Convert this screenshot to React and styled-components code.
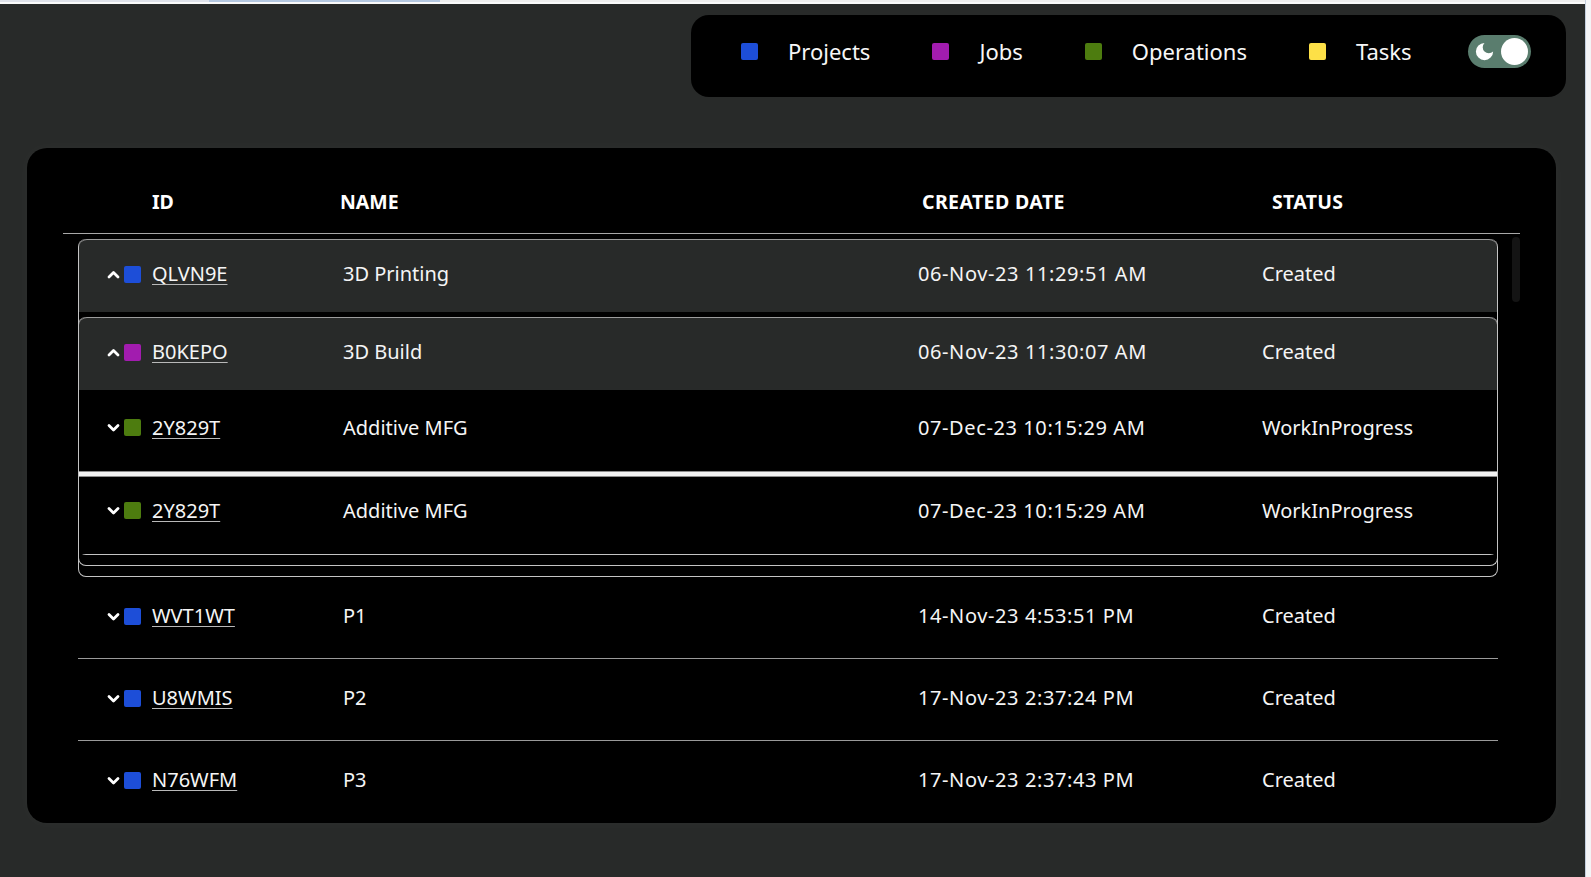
import React from 'react';
import styled, { createGlobalStyle } from 'styled-components';

const GlobalStyle = createGlobalStyle`
  html, body { margin: 0; padding: 0; background: #282a29; }
  body { font-family: "Noto Sans", "DejaVu Sans", sans-serif; color: #f5f5f5; }
  * { box-sizing: border-box; }
`;

const COLORS = {
  project: '#1d4ed8',
  job: '#a21caf',
  operation: '#4d7c0f',
  task: '#fde047',
};

const Window = styled.div`
  display: flex;
  width: 1591px;
  height: 877px;
  overflow: hidden;
  background: #282a29;
`;

const Main = styled.div`
  flex: 1;
  min-width: 0;
  display: flex;
  flex-direction: column;
`;

const BrowserEdge = styled.div`
  width: 6px;
  flex-shrink: 0;
  background: #f3f4f6;
  border-left: 1px solid #c3cedd;
`;

const TopStrip = styled.div`
  height: 4px;
  display: flex;
  align-items: flex-start;
  background: #fafafa;
  flex-shrink: 0;
`;

const TabSeg = styled.div`
  height: 2px;
  width: ${p => p.$w};
  flex: ${p => (p.$grow ? 1 : 'none')};
  background: ${p => p.$c};
`;

const Content = styled.div`
  display: flex;
  flex-direction: column;
  padding: 11px 19px 0 27px;
`;

const Legend = styled.div`
  align-self: flex-end;
  width: 875px;
  height: 82px;
  background: #000;
  border-radius: 18px;
  display: flex;
  align-items: center;
  padding: 0 0 10px 50px;
`;

const LegendItems = styled.div`
  display: flex;
  align-items: center;
  gap: 62px;
`;

const LegendItem = styled.div`
  display: flex;
  align-items: center;
  gap: 30px;
  font-size: 22px;
  line-height: 1;
  color: #f7f7f7;
`;

const Swatch = styled.span`
  display: inline-block;
  width: 17px;
  height: 17px;
  border-radius: 2px;
  background: ${p => p.$c};
  flex-shrink: 0;
`;

const Toggle = styled.div`
  margin-left: 56px;
  width: 63px;
  height: 33px;
  border-radius: 17px;
  background: #5a7d6e;
  display: flex;
  align-items: center;
  justify-content: space-between;
  padding: 0 3px 0 5px;
`;

const Knob = styled.span`
  width: 27px;
  height: 27px;
  border-radius: 50%;
  background: #fff;
`;

const Card = styled.div`
  margin: 51px 10px 0 0;
  height: 675px;
  background: #000;
  border-radius: 20px;
  padding: 0 36px;
  display: flex;
  flex-direction: column;
  overflow: hidden;
  box-shadow: 0 0 14px rgba(255, 255, 255, 0.03);
`;

const HeaderRow = styled.div`
  display: grid;
  grid-template-columns: 188px 582px 350px 1fr;
  height: 86px;
  padding: 43px 0 0 89px;
  border-bottom: 1px solid #a8a8a8;
  font-weight: 700;
  font-size: 19.5px;
  line-height: 21px;
  color: #fff;
  flex-shrink: 0;
`;

const HeaderCell = styled.span`
  letter-spacing: ${p => p.$ls || 0}px;
`;

const Body = styled.div`
  display: flex;
  gap: 14px;
  padding-left: 15px;
  height: 589px;
  overflow: hidden;
`;

const RowsColumn = styled.div`
  flex: 1;
  min-width: 0;
  display: flex;
  flex-direction: column;
  padding-top: 5px;
`;

const ScrollTrack = styled.div`
  width: 8px;
  flex-shrink: 0;
  padding-top: 3px;
`;

const ScrollThumb = styled.div`
  height: 65px;
  border-radius: 4px;
  background: #141414;
`;

const Group = styled.div`
  display: flex;
  flex-direction: column;
  gap: ${p => p.$gap}px;
  border: 1px solid #c4c4c4;
  border-top: none;
  border-radius: 8px;
  padding-bottom: ${p => p.$pb}px;
  margin: 0 ${p => (p.$nested ? '-1px' : '0')};
`;

const Row = styled.div`
  display: grid;
  grid-template-columns: 236px 575px 344px 1fr;
  align-items: center;
  font-size: 20px;
  line-height: 24px;
  color: #f5f5f5;
  white-space: nowrap;
`;

const GroupHeadRow = styled(Row)`
  height: 73px;
  padding: 0 0 4px 28px;
  background: #282a29;
  border-top: 1px solid #9c9c9c;
  border-radius: 8px 8px 0 0;
`;

const OpRow = styled(Row)`
  height: 77px;
  padding: 0 0 10px 28px;
  background: #000;
`;

const PlainRow = styled(Row)`
  height: 83px;
  padding: 0 0 3px 29px;
  border-bottom: ${p => (p.$last ? 'none' : '1px solid #9a9a9a')};
`;

const Divider = styled.div`
  height: 6px;
  background: #f2f2f2;
  border-top: 1px solid #8c8c8c;
  border-bottom: 1px solid #8c8c8c;
`;

const IdCell = styled.div`
  display: flex;
  align-items: center;
`;

const DateCell = styled.span`
  letter-spacing: 0.6px;
`;

const Chevron = styled.svg`
  width: 13px;
  height: 9px;
  margin-right: 4px;
  flex-shrink: 0;
`;

const RowSwatch = styled(Swatch)`
  margin-right: 11px;
`;

const IdLink = styled.a`
  color: #f5f5f5;
  text-decoration: underline;
  text-decoration-color: #b9b9b9;
  text-underline-offset: 3px;
  text-decoration-thickness: 1px;
`;

function ChevronIcon({ up }) {
  return (
    <Chevron viewBox="0 0 13 9">
      <polyline
        points={up ? '2,7 6.5,2.5 11,7' : '2,2.5 6.5,7 11,2.5'}
        fill="none"
        stroke="#fff"
        strokeWidth="2.8"
        strokeLinecap="round"
        strokeLinejoin="round"
      />
    </Chevron>
  );
}

function Cells({ up, color, id, name, date, status }) {
  return (
    <>
      <IdCell>
        <ChevronIcon up={up} />
        <RowSwatch $c={color} />
        <IdLink href="#">{id}</IdLink>
      </IdCell>
      <span>{name}</span>
      <DateCell>{date}</DateCell>
      <span>{status}</span>
    </>
  );
}

const legend = [
  { label: 'Projects', color: COLORS.project },
  { label: 'Jobs', color: COLORS.job },
  { label: 'Operations', color: COLORS.operation },
  { label: 'Tasks', color: COLORS.task },
];

const plainRows = [
  { id: 'WVT1WT', name: 'P1', date: '14-Nov-23 4:53:51 PM', status: 'Created' },
  { id: 'U8WMIS', name: 'P2', date: '17-Nov-23 2:37:24 PM', status: 'Created' },
  { id: 'N76WFM', name: 'P3', date: '17-Nov-23 2:37:43 PM', status: 'Created' },
];

export default function App() {
  return (
    <Window>
      <GlobalStyle />
      <Main>
        <TopStrip>
          <TabSeg $w="209px" $c="#dfe2ea" />
          <TabSeg $w="231px" $c="#b5c8e1" />
          <TabSeg $grow $c="#eeeeee" />
        </TopStrip>
        <Content>
          <Legend>
            <LegendItems>
              {legend.map(l => (
                <LegendItem key={l.label}>
                  <Swatch $c={l.color} />
                  <span>{l.label}</span>
                </LegendItem>
              ))}
            </LegendItems>
            <Toggle>
              <svg width="23" height="23" viewBox="0 0 24 24">
                <path d="M12 3a6 6 0 0 0 9 9 9 9 0 1 1-9-9Z" fill="#fff" />
              </svg>
              <Knob />
            </Toggle>
          </Legend>

          <Card>
            <HeaderRow>
              <HeaderCell>ID</HeaderCell>
              <HeaderCell>NAME</HeaderCell>
              <HeaderCell $ls={0.4}>CREATED DATE</HeaderCell>
              <HeaderCell $ls={0.3}>STATUS</HeaderCell>
            </HeaderRow>
            <Body>
              <RowsColumn>
                <Group $gap={5} $pb={10}>
                  <GroupHeadRow>
                    <Cells up color={COLORS.project} id="QLVN9E" name="3D Printing" date="06-Nov-23 11:29:51 AM" status="Created" />
                  </GroupHeadRow>
                  <Group $gap={4} $pb={10} $nested>
                    <GroupHeadRow>
                      <Cells up color={COLORS.job} id="B0KEPO" name="3D Build" date="06-Nov-23 11:30:07 AM" status="Created" />
                    </GroupHeadRow>
                    <Group $gap={0} $pb={0} $nested>
                      <OpRow>
                        <Cells color={COLORS.operation} id="2Y829T" name="Additive MFG" date="07-Dec-23 10:15:29 AM" status="WorkInProgress" />
                      </OpRow>
                      <Divider />
                      <OpRow>
                        <Cells color={COLORS.operation} id="2Y829T" name="Additive MFG" date="07-Dec-23 10:15:29 AM" status="WorkInProgress" />
                      </OpRow>
                    </Group>
                  </Group>
                </Group>
                {plainRows.map((r, i) => (
                  <PlainRow key={r.id} $last={i === plainRows.length - 1}>
                    <Cells color={COLORS.project} id={r.id} name={r.name} date={r.date} status={r.status} />
                  </PlainRow>
                ))}
              </RowsColumn>
              <ScrollTrack>
                <ScrollThumb />
              </ScrollTrack>
            </Body>
          </Card>
        </Content>
      </Main>
      <BrowserEdge />
    </Window>
  );
}
